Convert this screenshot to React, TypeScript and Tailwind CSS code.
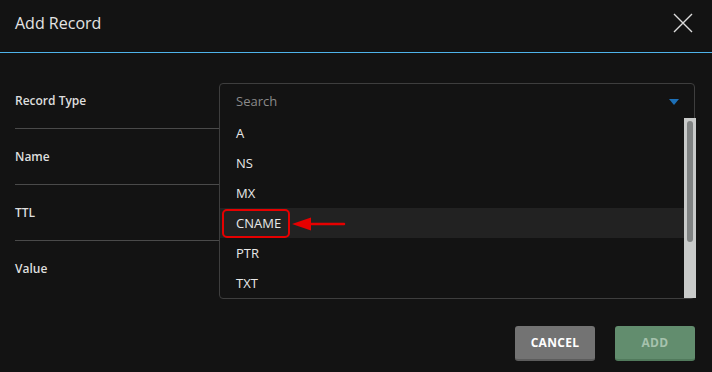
const options = ["A", "NS", "MX", "CNAME", "PTR", "TXT"];
const fields = ["Record Type", "Name", "TTL", "Value"];

export default function App() {
  return (
    <div
      className="relative w-[712px] h-[372px] overflow-hidden bg-[#131313] text-[#e2e2e2]"
      style={{ fontFamily: '"Open Sans", "Noto Sans", sans-serif' }}
    >
      <div className="h-[53px] flex items-center justify-between pl-[15px] pr-[19px] border-b border-[#4fb3ea]">
        <span className="text-[16px] text-[#e4e4e4] -mt-[6px]">Add Record</span>
        <svg className="-mt-[6px]" width="20" height="20" viewBox="0 0 20 20">
          <path d="M1 1 L19 19 M19 1 L1 19" stroke="#dcdcdc" strokeWidth="1.4" />
        </svg>
      </div>

      <div className="px-[15px] pt-[20px] pr-[17px]">
        {fields.map((f, i) => (
          <div
            key={f}
            className={`h-[56px] flex items-center ${i < fields.length - 1 ? "border-b border-[#4a4a4a]" : ""}`}
          >
            <span className="text-[12px] font-semibold text-[#dedede]">{f}</span>
          </div>
        ))}
        <div className="flex justify-end gap-[20px] mt-[29px]">
          <button className="w-[80px] h-[35px] rounded-[3px] bg-[#737373] border-b-2 border-[#5c5c5c] text-[12px] font-bold text-white tracking-wide">
            CANCEL
          </button>
          <button className="w-[80px] h-[35px] rounded-[3px] bg-[#628d6e] border-b-2 border-[#517a5c] text-[12px] font-bold text-[#a6c2ad] tracking-wide">
            ADD
          </button>
        </div>
      </div>

      <div className="absolute left-[219px] top-[83px] w-[476px] h-[216px] border border-[#3e3e3e] rounded-[4px] bg-[#131313] flex flex-col">
        <div className="h-[34px] flex items-center justify-between pl-[16px] pr-[15px] pt-[2px] shrink-0">
          <span className="text-[13px] text-[#8a8a8a]">Search</span>
          <svg width="10" height="6" viewBox="0 0 10 6">
            <path d="M0 0 H10 L5 6 Z" fill="#1d70b7" />
          </svg>
        </div>
        <div className="flex flex-1">
          <div className="flex-1 flex flex-col">
            {options.map((o) => (
              <div
                key={o}
                className={`h-[30px] flex items-center pl-[16px] pt-[2px] text-[13px] text-[#e8e8e8] ${o === "CNAME" ? "bg-[#222222]" : ""}`}
              >
                {o}
              </div>
            ))}
          </div>
          <div className="w-[12px] -mr-[2px] bg-[#c9cbca] pt-[3px] pl-[3px] pr-[3px]">
            <div className="w-[6px] h-[121px] rounded-full bg-[#808383]" />
          </div>
        </div>
      </div>

      <div className="absolute left-[222px] top-[209px] w-[68px] h-[29px] border-2 border-[#e60000] rounded-[5px]" />
      <svg className="absolute left-[290px] top-[216px]" width="56" height="16" viewBox="0 0 56 16">
        <path d="M20 8 H54" stroke="#e60000" strokeWidth="2.5" strokeLinecap="round" />
        <path d="M2 8 L21 1.5 L21 14.5 Z" fill="#e60000" />
      </svg>
    </div>
  );
}
